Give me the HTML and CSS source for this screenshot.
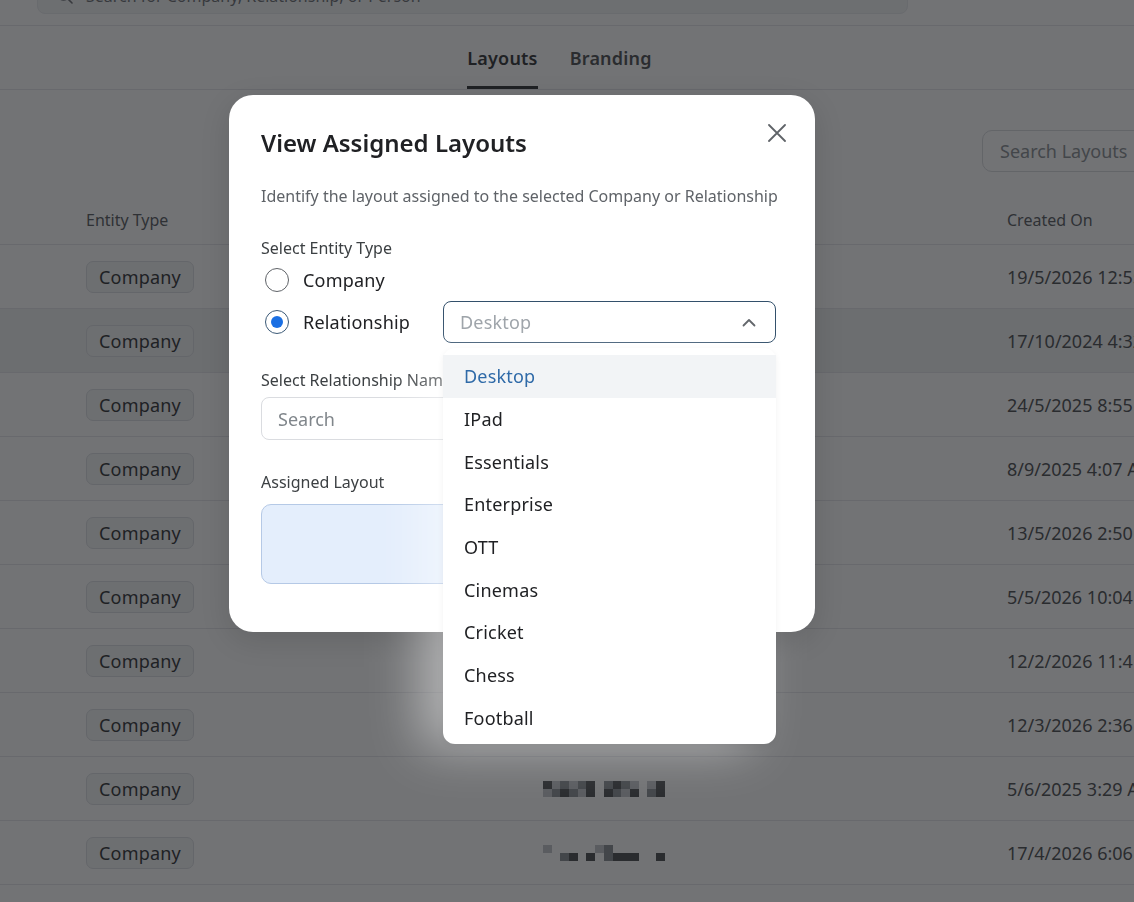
FILE: index.html
```html
<!DOCTYPE html>
<html lang="en">

<head>
    <meta charset="UTF-8">
    <meta name="viewport" content="width=device-width, initial-scale=1.0">
    <title>Layouts</title>
    <link rel="stylesheet" href="styles.css">
</head>

<body>
    <div class="page">
        <header class="topbar">
            <div class="global-search">
                <svg class="search-icon" width="18" height="18" viewBox="0 0 18 18">
                    <circle cx="7.5" cy="7.5" r="5.5" fill="none" stroke="#5f6368" stroke-width="1.6" />
                    <path d="M11.5 11.5 L16 16" stroke="#5f6368" stroke-width="1.6" stroke-linecap="round" />
                </svg>
                <span>Search for Company, Relationship, or Person</span>
            </div>
        </header>

        <nav class="tabs">
            <a class="tab active">Layouts</a>
            <a class="tab">Branding</a>
        </nav>

        <div class="toolbar">
            <div class="layout-search">Search Layouts</div>
        </div>

        <div class="table">
            <div class="row head">
                <div></div>
                <div>Entity Type</div>
                <div>Relationship</div>
                <div>Created On</div>
            </div>
            <div class="row">
                <div></div>
                <div><span class="badge">Company</span></div>
                <div></div>
                <div>19/5/2026 12:55 PM</div>
            </div>
            <div class="row hover">
                <div></div>
                <div><span class="badge">Company</span></div>
                <div></div>
                <div>17/10/2024 4:32 PM</div>
            </div>
            <div class="row">
                <div></div>
                <div><span class="badge">Company</span></div>
                <div></div>
                <div>24/5/2025 8:55 AM</div>
            </div>
            <div class="row">
                <div></div>
                <div><span class="badge">Company</span></div>
                <div></div>
                <div>8/9/2025 4:07 AM</div>
            </div>
            <div class="row">
                <div></div>
                <div><span class="badge">Company</span></div>
                <div></div>
                <div>13/5/2026 2:50 PM</div>
            </div>
            <div class="row">
                <div></div>
                <div><span class="badge">Company</span></div>
                <div></div>
                <div>5/5/2026 10:04 AM</div>
            </div>
            <div class="row">
                <div></div>
                <div><span class="badge">Company</span></div>
                <div></div>
                <div>12/2/2026 11:41 AM</div>
            </div>
            <div class="row">
                <div></div>
                <div><span class="badge">Company</span></div>
                <div></div>
                <div>12/3/2026 2:36 PM</div>
            </div>
            <div class="row">
                <div></div>
                <div><span class="badge">Company</span></div>
                <div>
                    <!-- masked relationship name -->
                    <div class="masked">
                        <span class="d"></span><span class="l"></span><span class="m"></span><span class="l"></span><span class="m"></span><span class="d"></span><span></span><span class="m"></span><span class="d"></span><span class="m"></span><span class="l"></span><span></span><span class="l"></span><span class="d"></span>
                        <span class="l"></span><span class="m"></span><span class="d"></span><span class="m"></span><span class="l"></span><span class="d"></span><span></span><span class="d"></span><span class="m"></span><span class="l"></span><span class="d"></span><span></span><span class="m"></span><span class="d"></span>
                    </div>
                </div>
                <div>5/6/2025 3:29 AM</div>
            </div>
            <div class="row">
                <div></div>
                <div><span class="badge">Company</span></div>
                <div>
                    <div class="masked">
                        <span class="l"></span><span></span><span></span><span></span><span></span><span></span><span class="l"></span><span class="m"></span><span></span><span></span><span></span><span></span><span></span><span></span>
                        <span></span><span></span><span class="m"></span><span class="d"></span><span></span><span class="d"></span><span></span><span class="m"></span><span class="d"></span><span class="d"></span><span class="d"></span><span></span><span></span><span class="d"></span>
                    </div>
                </div>
                <div>17/4/2026 6:06 PM</div>
            </div>
        </div>
    </div>

    <div class="backdrop"></div>

    <div class="modal">
        <div class="modal-head">
            <h2>View Assigned Layouts</h2>
            <button class="close" aria-label="Close">
                <svg width="18" height="18" viewBox="0 0 18 18">
                    <path d="M1 1 L17 17 M17 1 L1 17" stroke="#5f6368" stroke-width="1.8" stroke-linecap="round" />
                </svg>
            </button>
        </div>
        <p class="desc">Identify the layout assigned to the selected Company or Relationship</p>

        <div class="label">Select Entity Type</div>
        <label class="radio-row">
            <span class="radio"></span>
            <span>Company</span>
        </label>
        <div class="radio-row rel">
            <span class="radio checked"></span>
            <span>Relationship</span>
            <div class="select">
                <div class="select-box">
                    <span class="placeholder">Desktop</span>
                    <svg width="14" height="9" viewBox="0 0 14 9">
                        <path d="M1.5 7.5 L7 2 L12.5 7.5" fill="none" stroke="#5f6368" stroke-width="1.8" stroke-linecap="round" stroke-linejoin="round" />
                    </svg>
                </div>
                <ul class="options">
                    <li class="active">Desktop</li>
                    <li>IPad</li>
                    <li>Essentials</li>
                    <li>Enterprise</li>
                    <li>OTT</li>
                    <li>Cinemas</li>
                    <li>Cricket</li>
                    <li>Chess</li>
                    <li>Football</li>
                </ul>
            </div>
        </div>

        <div class="label name-label">Select Relationship Name</div>
        <div class="input">Search</div>

        <div class="label layout-label">Assigned Layout</div>
        <div class="assigned"></div>
    </div>
</body>

</html>
```

FILE: styles.css
```css
* {
    margin: 0;
    padding: 0;
    box-sizing: border-box;
}

body {
    width: 100vw;
    height: 100vh;
    overflow: hidden;
    background-color: #ffffff;
    font-family: "Noto Sans", "Open Sans", sans-serif;
    color: #202124;
}

.page {
    width: 1300px;
    margin-top: -30px;
}

/* top search */
.topbar {
    padding: 8px 0 11px 37px;
    border-bottom: 1px solid #e3e5e8;
}

.global-search {
    width: 871px;
    height: 36px;
    display: flex;
    align-items: center;
    gap: 12px;
    padding-left: 18px;
    border-radius: 8px;
    background-color: #f1f3f4;
    border: 1px solid #e6e8eb;
    font-size: 16px;
    color: #5f6368;
}

/* tabs */
.tabs {
    display: flex;
    justify-content: center;
    gap: 32px;
    padding-right: 181px;
    border-bottom: 1px solid #e3e5e8;
}

.tab {
    padding: 20px 0 16px;
    font-size: 18px;
    line-height: 24px;
    font-weight: 600;
    letter-spacing: 0.2px;
    color: #3c4043;
    border-bottom: 3px solid transparent;
}

.tab.active {
    color: #202124;
    border-bottom-color: #202124;
}

.toolbar {
    display: flex;
    justify-content: flex-end;
    padding: 40px 24px 0 0;
}

.layout-search {
    width: 294px;
    height: 42px;
    display: flex;
    align-items: center;
    padding-left: 17px;
    border: 1px solid #d5d8dc;
    border-radius: 10px;
    font-size: 18px;
    color: #80868b;
}

/* table */
.table {
    margin-top: 23px;
}

.row {
    display: grid;
    grid-template-columns: 86px 457px 464px 1fr;
    align-items: center;
    height: 64px;
    border-bottom: 1px solid #e3e5e8;
    font-size: 18px;
    color: #3c4043;
    white-space: nowrap;
}

.row.head {
    height: 50px;
    font-size: 16px;
    color: #4a4e53;
}

.row.head div:nth-child(3) {
    visibility: hidden;
}

.row.hover {
    background-color: #eef0f2;
}

.badge {
    display: inline-flex;
    align-items: center;
    height: 32px;
    padding: 0 12px;
    border: 1px solid #dadce0;
    border-radius: 7px;
    background-color: #f1f3f4;
    color: #202124;
    letter-spacing: 0.2px;
}

.masked {
    display: grid;
    grid-template-columns: repeat(14, 8.7px);
    grid-auto-rows: 8px;
    width: 122px;
}

.masked span.d {
    background-color: #3c4043;
}

.masked span.m {
    background-color: #80868b;
}

.masked span.l {
    background-color: #bdc1c6;
}

.backdrop {
    position: fixed;
    inset: 0;
    background-color: rgba(32, 33, 36, 0.63);
}

/* modal */
.modal {
    position: absolute;
    left: 229px;
    top: 95px;
    width: 586px;
    padding: 32px 39px 48px 32px;
    border-radius: 24px;
    background-color: #ffffff;
    box-shadow: 0 8px 30px rgba(0, 0, 0, 0.12);
}

.modal-head {
    display: flex;
    justify-content: space-between;
    align-items: flex-start;
}

.modal-head h2 {
    font-size: 24px;
    line-height: 32px;
    font-weight: 600;
    color: #202124;
}

.close {
    border: none;
    background: none;
    margin: -3px -10px 0 0;
    padding: 0;
    width: 18px;
    height: 18px;
}

.desc {
    margin-top: 25px;
    font-size: 16px;
    line-height: 24px;
    color: #5f6368;
    white-space: nowrap;
}

.label {
    margin-top: 28px;
    font-size: 16px;
    line-height: 24px;
    color: #3c4043;
}

.radio-row {
    display: flex;
    align-items: center;
    gap: 14px;
    margin-top: 8px;
    height: 24px;
    font-size: 18px;
    letter-spacing: 0.2px;
    color: #202124;
}

.radio-row.rel {
    margin-top: 9px;
    height: 42px;
    position: relative;
}

.radio {
    width: 24px;
    height: 24px;
    margin-left: 4px;
    border-radius: 50%;
    border: 1.5px solid #5f6368;
    position: relative;
}

.radio.checked {
    border-color: #3c5a77;
}

.radio.checked::after {
    content: "";
    position: absolute;
    width: 12px;
    height: 12px;
    left: 50%;
    top: 50%;
    transform: translate(-50%, -50%);
    border-radius: 50%;
    background-color: #1a6fe3;
}

.select {
    margin-left: auto;
    width: 333px;
    position: relative;
}

.select-box {
    height: 42px;
    display: flex;
    align-items: center;
    justify-content: space-between;
    padding: 0 19px 0 16px;
    border: 1px solid #33506b;
    border-radius: 8px;
    font-size: 18px;
    color: #9aa0a6;
}

/* open list, with a soft light haze that spills to the left */
.options {
    list-style: none;
    position: absolute;
    left: 0;
    top: 47px;
    width: 333px;
    padding: 7px 0 5px;
    border-radius: 12px;
    background-color: #ffffff;
    box-shadow: 0 2px 6px rgba(0, 0, 0, 0.06), -24px 4px 50px 0 rgba(255, 255, 255, 0.45);
    z-index: 2;
}

.options li {
    height: 42.7px;
    display: flex;
    align-items: center;
    padding-left: 21px;
    font-size: 18px;
    letter-spacing: 0.2px;
    color: #202124;
}

.options li.active {
    background-color: #f2f4f6;
    color: #2f6aa8;
}

.name-label {
    margin-top: 25px;
    white-space: nowrap;
}

.input {
    margin-top: 5px;
    height: 43px;
    display: flex;
    align-items: center;
    padding-left: 16px;
    border: 1px solid #dadce0;
    border-radius: 8px;
    font-size: 18px;
    color: #80868b;
}

.layout-label {
    margin-top: 30px;
}

.assigned {
    margin-top: 10px;
    height: 80px;
    border: 1px solid #b5c9e6;
    border-radius: 10px;
    background-color: #e4eefc;
}
```
